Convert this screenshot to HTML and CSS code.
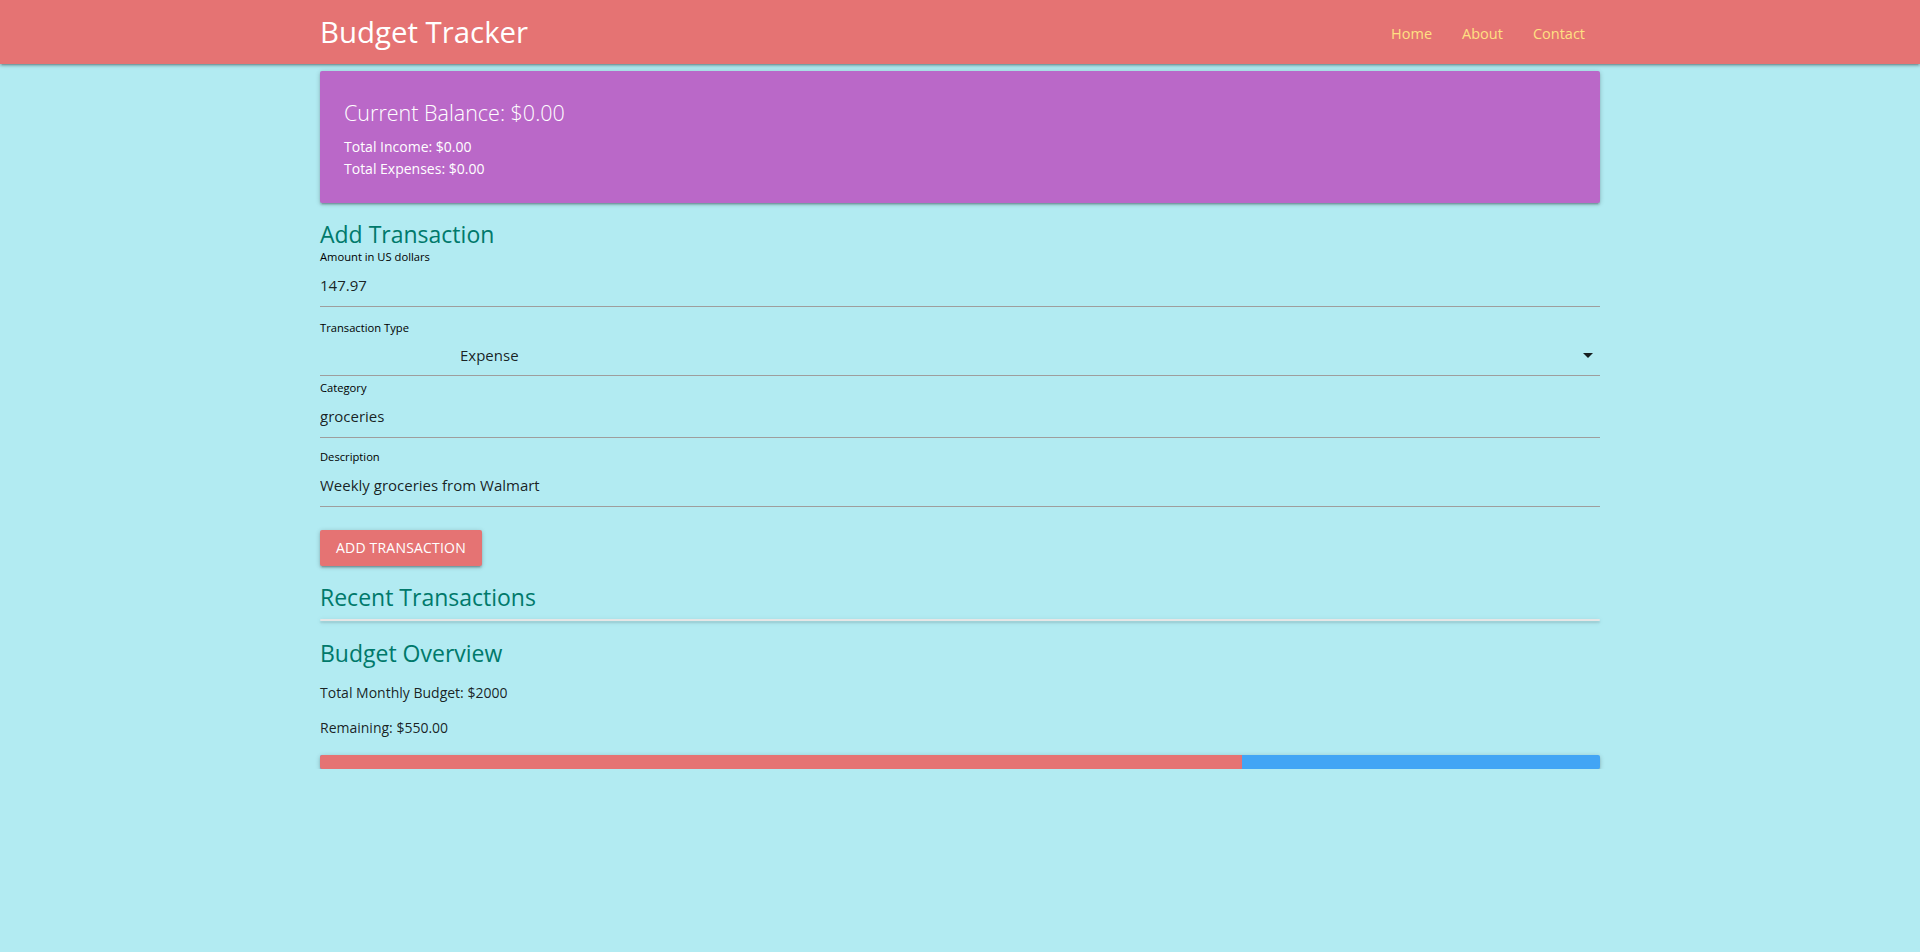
FILE: index.html
```html
<!DOCTYPE html>
<html lang="en">
<head>
<meta charset="utf-8">
<title>Budget Tracker</title>
<link rel="stylesheet" href="styles.css">
</head>
<body>
<header class="topbar">
  <div class="container topbar-inner">
    <a class="brand" href="#">Budget Tracker</a>
    <ul class="nav-links">
      <li><a href="#">Home</a></li>
      <li><a href="#">About</a></li>
      <li><a href="#">Contact</a></li>
    </ul>
  </div>
</header>

<main class="container">
  <section class="balance-card">
    <h2 class="card-title">Current Balance: $0.00</h2>
    <p class="card-line">Total Income: $0.00</p>
    <p class="card-line">Total Expenses: $0.00</p>
  </section>

  <h3 class="section-title">Add Transaction</h3>
  <form class="tx-form">
    <div class="field field--first">
      <label class="field-label">Amount in US dollars</label>
      <input class="field-input" type="text" value="147.97">
    </div>
    <div class="field field--select">
      <label class="field-label">Transaction Type</label>
      <div class="select-value">
        <span class="select-text">Expense</span>
        <svg class="select-caret" viewBox="0 0 24 24"><path d="M7 10l5 5 5-5z"/></svg>
      </div>
    </div>
    <div class="field field--tight">
      <label class="field-label">Category</label>
      <input class="field-input" type="text" value="groceries">
    </div>
    <div class="field">
      <label class="field-label">Description</label>
      <input class="field-input" type="text" value="Weekly groceries from Walmart">
    </div>
    <button class="btn" type="button">Add Transaction</button>
  </form>

  <h3 class="section-title">Recent Transactions</h3>
  <div class="collection"></div>

  <h3 class="section-title section-title--overview">Budget Overview</h3>
  <p class="overview-line">Total Monthly Budget: $2000</p>
  <p class="overview-line">Remaining: $550.00</p>
  <div class="progress">
    <div class="progress-fill" style="width: 72%"></div>
  </div>
</main>
</body>
</html>
```

FILE: styles.css
```css
html, body {
  margin: 0;
  padding: 0;
}

body {
  background: #b2ebf2;
  font-family: "Open Sans", "Noto Sans", sans-serif;
  color: rgba(0, 0, 0, 0.87);
}

.container {
  width: 1280px;
  margin: 0 auto;
}

/* Header */
.topbar {
  background: #e57373;
  height: 64px;
  box-shadow: 0 2px 2px 0 rgba(0,0,0,0.14), 0 3px 1px -2px rgba(0,0,0,0.12), 0 1px 5px 0 rgba(0,0,0,0.2);
}

.topbar-inner {
  display: flex;
  justify-content: space-between;
  align-items: stretch;
  height: 64px;
}

.brand {
  color: #fff;
  font-size: 29.4px;
  line-height: 64px;
  text-decoration: none;
}

.nav-links {
  display: flex;
  align-items: center;
  list-style: none;
  margin: 0;
  padding: 3px 0 0;
}

.nav-links a {
  display: block;
  padding: 0 15px;
  color: #ffe082;
  font-size: 14.5px;
  text-decoration: none;
}

/* Balance card */
.balance-card {
  margin-top: 7px;
  background: #ba68c8;
  border-radius: 2px;
  padding: 24px 24px 23px;
  color: #fff;
  box-shadow: 0 2px 2px 0 rgba(0,0,0,0.14), 0 3px 1px -2px rgba(0,0,0,0.12), 0 1px 5px 0 rgba(0,0,0,0.2);
}

.card-title {
  margin: 0 0 5px;
  font-size: 21.5px;
  font-weight: 300;
  line-height: 36px;
}

.card-line {
  margin: 0;
  font-size: 14px;
  line-height: 22px;
}

/* Section titles */
.section-title {
  margin: 17px 0 0;
  color: #00796b;
  font-size: 23px;
  font-weight: 400;
  line-height: 28px;
}

.section-title--overview {
  margin-top: 18px;
}

/* Form */
.tx-form {
  margin: 0;
}

.field {
  margin-top: 12px;
}

.field--first {
  margin-top: 2px;
}

.field--select {
  margin-top: 14px;
}

.field--tight {
  margin-top: 5px;
}

.field-label {
  display: block;
  font-size: 11.2px;
  line-height: 14px;
  color: #000;
}

.field-input {
  display: block;
  width: 100%;
  height: 42px;
  margin: 0;
  padding: 0;
  border: 0;
  border-bottom: 1px solid #9e9e9e;
  border-radius: 0;
  background: transparent;
  font-family: "Open Sans", "Noto Sans", sans-serif;
  font-size: 15px;
  color: rgba(0, 0, 0, 0.87);
  outline: none;
  box-sizing: content-box;
}

.select-value {
  display: flex;
  align-items: center;
  justify-content: space-between;
  height: 40px;
  border-bottom: 1px solid #9e9e9e;
  font-size: 15px;
}

.select-text {
  margin-left: 140px;
}

.select-caret {
  width: 24px;
  height: 24px;
  fill: rgba(0, 0, 0, 0.87);
}

.btn {
  display: block;
  margin-top: 23px;
  height: 36px;
  padding: 0 16px;
  line-height: 36px;
  border: none;
  border-radius: 2px;
  background: #e57373;
  color: #fff;
  font-family: "Open Sans", "Noto Sans", sans-serif;
  font-size: 14px;
  letter-spacing: 0.2px;
  text-transform: uppercase;
  box-shadow: 0 2px 2px 0 rgba(0,0,0,0.14), 0 3px 1px -2px rgba(0,0,0,0.12), 0 1px 5px 0 rgba(0,0,0,0.2);
  cursor: pointer;
}

/* Recent transactions (empty collection) */
.collection {
  margin-top: 8px;
  height: 2px;
  background: #e6e6e6;
  border-radius: 2px;
  box-shadow: 0 2px 2px 0 rgba(0,0,0,0.10), 0 3px 1px -2px rgba(0,0,0,0.08), 0 1px 5px 0 rgba(0,0,0,0.14);
}

/* Overview */
.overview-line {
  margin: 14.5px 0 0;
  font-size: 14px;
  line-height: 21px;
}

.progress {
  display: flex;
  margin-top: 17px;
  height: 14px;
  background: #42a5f5;
  border-radius: 2px;
  overflow: hidden;
  box-shadow: 0 2px 2px 0 rgba(0,0,0,0.14), 0 3px 1px -2px rgba(0,0,0,0.12), 0 1px 5px 0 rgba(0,0,0,0.2);
}

.progress-fill {
  background: #e57373;
}
```
